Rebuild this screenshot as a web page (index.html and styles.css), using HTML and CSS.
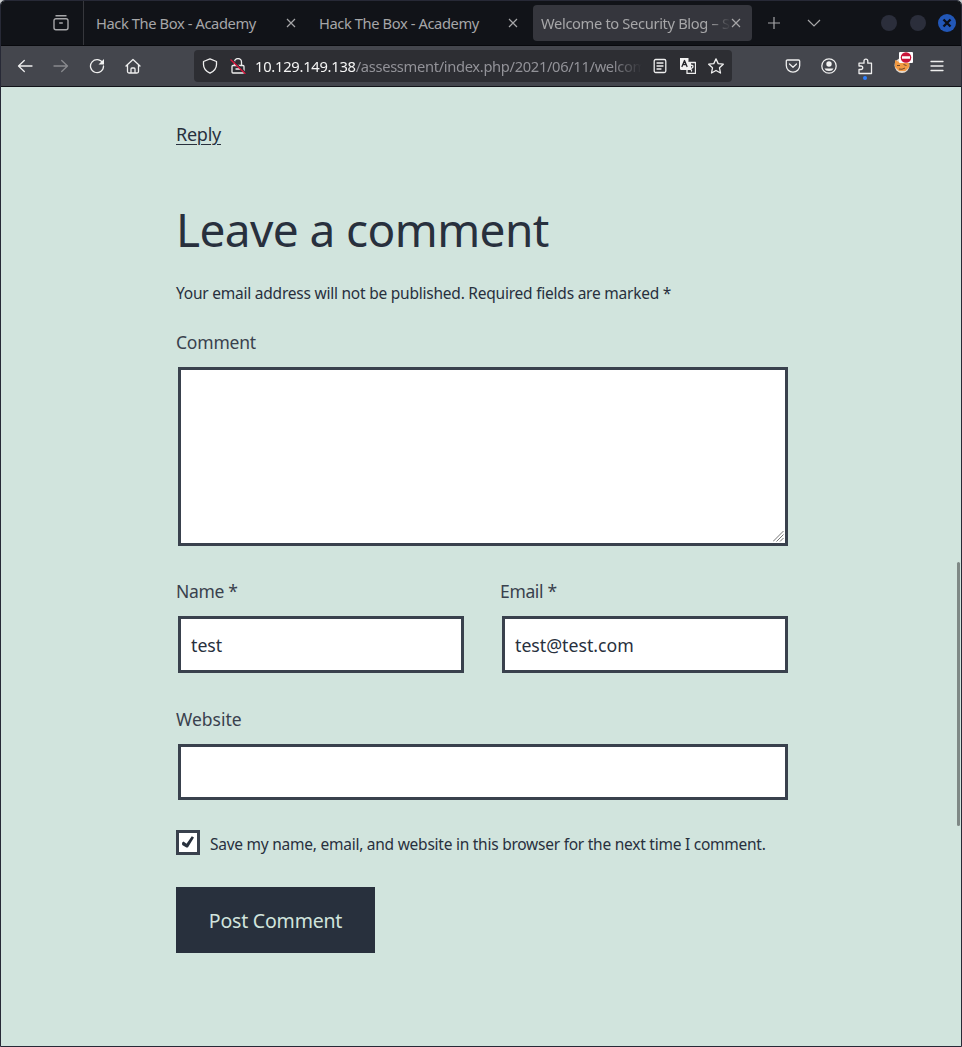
FILE: index.html
```html
<!DOCTYPE html>
<html lang="en">
<head>
<meta charset="utf-8">
<title>Welcome to Security Blog</title>
<link rel="stylesheet" href="styles.css">
</head>
<body>
<div class="window">
  <header class="tabs">
    <div class="recent"><svg width="18" height="18" viewBox="0 0 18 18"><path d="M3.500 1.700h11M4 4.700h10a2 2 0 0 1 2 2v7.100a2 2 0 0 1-2 2H4a2 2 0 0 1-2-2V6.700a2 2 0 0 1 2-2zM7.200 9h3.600"/></svg></div>
    <div class="tab first"><span class="title">Hack The Box - Academy</span><svg class="close" width="10" height="10" viewBox="0 0 10 10"><path d="M1 1l8 8M9 1l-8 8"/></svg></div>
    <div class="tab second"><span class="title">Hack The Box - Academy</span><svg class="close" width="10" height="10" viewBox="0 0 10 10"><path d="M1 1l8 8M9 1l-8 8"/></svg></div>
    <div class="tab active"><span class="title fade">Welcome to Security Blog – S</span><svg class="close" width="10" height="10" viewBox="0 0 10 10"><path d="M1 1l8 8M9 1l-8 8"/></svg></div>
    <svg class="plus" width="12" height="12" viewBox="0 0 12 12"><path d="M6 0v12M0 6h12"/></svg>
    <svg class="chevron" width="14" height="8" viewBox="0 0 14 8"><path d="M1 1l6 6 6-6"/></svg>
    <div class="controls"><i></i><i></i><b><svg width="18" height="18" viewBox="0 0 18 18"><path d="M5.500 5.500l7 7M12.500 5.500l-7 7"/></svg></b></div>
  </header>
  <nav class="toolbar">
    <svg class="nav" viewBox="0 0 16 16"><path d="M15 8H1.500M7.300 2.500L1.500 8l5.800 5.500"/></svg>
    <svg class="nav dim" viewBox="0 0 16 16"><path d="M1 8h13.500M8.700 2.500L14.500 8l-5.800 5.500"/></svg>
    <svg class="nav" viewBox="0 0 16 16"><path d="M13.800 5.200A6.500 6.500 0 1 0 14.500 8"/><path class="solid" d="M15 1v5.500H9.500z"/></svg>
    <svg class="nav" viewBox="0 0 16 16"><path d="M1 8l7-6.500L15 8M2.500 7v6.500q0 1.500 1.500 1.500h8q1.500 0 1.500-1.500V7M6 15v-4q0-1 1-1h2q1 0 1 1v4"/></svg>
    <div class="urlbar">
      <svg class="nav" viewBox="0 0 16 16"><path d="M8 .8l6.500 2.700v3c0 4.500-3 7-6.500 8.700C4.500 13.500 1.500 11 1.500 6.500v-3z"/></svg>
      <svg class="nav lock" viewBox="0 0 16 16"><path d="M4.500 7V4a3.500 3.500 0 0 1 7 0v3M3 7.500h10q1 0 1 1V14q0 1-1 1H3q-1 0-1-1V8.500q0-1 1-1zM6 11h4"/><path class="gap" d="M2 1.500l13.500 13.300"/><path class="slash" d="M1 2l14 13.500"/></svg>
      <span class="url"><em>10.129.149.138</em>/assessment/index.php/2021/06/11/welcom</span>
      <svg class="nav" viewBox="0 0 16 16"><rect x="2.200" y="1.500" width="11.600" height="13" rx="1.500"/><path d="M5 5h6M5 8h6M5 11h4"/></svg>
      <svg class="nav translate" viewBox="0 0 16 16"><path class="solid" d="M0 0h8.500v4H11v8H1.200Q0 12 0 10.800z"/><path d="M9 4.500h6.500v11H7V12"/><path class="ink" d="M2 8.500L4.500 2.500 7 8.500M3 6.500h3"/><path d="M10 8q1.500-1.500 3 0 .5 1.300-1.500 2.300M11.500 12v1"/></svg>
      <svg class="nav" viewBox="0 0 16 16"><path d="M8 .9l2.200 4.700 5.100.6-3.800 3.600 1 5.200L8 12.500 3.500 15l1-5.200L.7 6.200l5.100-.6z"/></svg>
    </div>
    <div class="actions">
      <svg class="nav" viewBox="0 0 16 16"><path d="M2.500 2h11q1.200 0 1.200 1.200V7.500a6.700 6.700 0 0 1-13.400 0V3.200Q1.300 2 2.500 2zM4.500 6L8 9.300 11.500 6"/></svg>
      <svg class="nav" viewBox="0 0 16 16"><circle cx="8" cy="8" r="7.200"/><circle class="solid" cx="8" cy="6" r="2.700"/><path class="solid" d="M3.500 10.500h9Q11.500 13 8 13t-4.500-2.500z"/></svg>
      <svg class="nav ext" viewBox="0 0 16 22"><path d="M2 15.500v-4h2a1.700 1.700 0 0 0 0-3.500H2V5.200h5V3a1.900 1.900 0 0 1 3.800 0v2.200h3.700v10.300z"/><circle class="dot" cx="8" cy="20" r="2"/></svg>
      <svg class="fox" width="20" height="22" viewBox="0 0 20 22"><circle class="ring" cx="9" cy="13.500" r="7.500"/><path class="face" d="M2 8l4 2h6l4-2 .3 7-4 4H6l-4-4z"/><path class="mark" d="M4 13.500h3M10.500 12.500l3 1M6 17q3 1 6-1"/><rect class="tile" x="6" width="14" height="11" rx="1"/><circle class="stop" cx="13" cy="5.500" r="5.300"/><path class="minus" d="M9 5.500h8"/></svg>
      <svg class="nav" viewBox="0 0 16 16"><path d="M2 3.500h12M2 8h12M2 12.500h12"/></svg>
    </div>
  </nav>
  <main class="page">
    <a class="reply"><span>Reply</span></a>
    <h1><span>Leave a comment</span></h1>
    <p class="note"><span>Your email address will not be published. Required fields are marked *</span></p>
    <label class="l-comment">Comment</label>
    <div class="field area"><svg width="11" height="11" viewBox="0 0 11 11"><path d="M0 10.500L10.500 0M3.500 10.500l7-7M7 10.500l3.500-3.500"/></svg></div>
    <div class="pair">
      <div><label class="short">Name *</label><div class="field"><span class="value">test</span></div></div>
      <div><label class="short">Email *</label><div class="field"><span class="value">test@test.com</span></div></div>
    </div>
    <label class="l-site">Website</label>
    <div class="field site"></div>
    <div class="save"><span class="check"><svg width="19" height="19" viewBox="0 0 19 19"><path d="M3 9.700l1.500-1.200 3 2.200 5.300-7.500 2.200 1.300-5.800 9.500q-.8.900-1.800.4L3.200 12z"/></svg></span><span class="savetext">Save my name, email, and website in this browser for the next time I comment.</span></div>
    <button><span>Post Comment</span></button>
  </main>
  <div class="scroll"></div>
</div>
</body>
</html>
```
FILE: styles.css
```css
* { box-sizing: border-box; }
body { margin: 0; background: #c9cbcd; font-family: "Noto Sans", sans-serif; }
svg { flex: none; display: block; fill: none; }
.window { position: relative; height: 1047px; border: 1px solid #272936; display: flex; flex-direction: column; background: #d1e4dd; overflow: hidden; border-radius: 5px 5px 0 0; }
.tabs { height: 45px; background: #111318; display: flex; align-items: center; border-bottom: 1px solid #08090d; color: #a6a6a8; flex: none; }
.tabs > * { flex: none; }
.tabs svg { stroke: #a6a6a8; stroke-width: 1.2; }
.recent { width: 83px; height: 44px; padding: 13px 0 0 51px; border-right: 1px solid #36373c; }
.tabs .recent svg { stroke-width: 1.4; }
.tab { height: 36px; display: flex; align-items: center; justify-content: space-between; font-size: 14.7px; white-space: nowrap; }
.first { width: 200px; margin-left: 12px; }
.second { width: 199px; margin-left: 23px; }
.active { width: 219px; margin-left: 15px; padding: 0 11px 0 8px; background: #35363d; border-radius: 4px; }
.title { letter-spacing: -.4px; }
.fade { width: 190px; letter-spacing: -.35px; overflow: hidden; -webkit-mask-image: linear-gradient(90deg, #000 88%, transparent); mask-image: linear-gradient(90deg, #000 88%, transparent); }
.plus { margin-left: 16px; }
.chevron { margin-left: 27px; }
.controls { display: flex; margin-left: 60px; gap: 13px; }
.controls i, .controls b { width: 16px; height: 16px; border-radius: 50%; background: #2b2e3b; }
.controls b { width: 18px; height: 18px; background: #2257b7; margin-left: -1px; }
.controls i { margin-top: 1px; }
.tabs .controls b svg { stroke: #0b0e17; stroke-width: 2.4; }
.toolbar { height: 41px; background: #44464d; border-bottom: 1px solid #111318; padding-left: 16px; display: flex; align-items: center; gap: 20px; flex: none; }
.nav { width: 16px; height: 16px; stroke: #eee; stroke-width: 1.3; stroke-linejoin: round; stroke-linecap: round; }
.dim { opacity: .4; }
.solid { fill: #f2f2f2; stroke: none; }
.urlbar { width: 538px; height: 32px; border-radius: 4px; background: #2d2e33; margin-left: 33px; display: flex; align-items: center; padding: 0 8px; gap: 12px; flex: none; }
.gap { stroke: #2d2e33; }
.slash { stroke: #dc143c; }
.url { width: 388px; margin-left: -3px; margin-right: -2px; overflow: hidden; white-space: nowrap; color: #929298; font-size: 14.7px; letter-spacing: -.33px; -webkit-mask-image: linear-gradient(90deg, #000 92%, transparent); mask-image: linear-gradient(90deg, #000 92%, transparent); }
.url em { font-style: normal; color: #f4f4f4; letter-spacing: -.25px; }
.ink { stroke: #25262b; }
.actions { display: flex; gap: 20px; margin-left: 33px; align-items: center; }
.ext { height: 22px; margin-top: 6px; }
.dot { fill: #2d80ff; stroke: none; }
.fox { margin: -6px -4px 0 0; }
.ring { fill: #e6d8ca; }
.face { fill: #f29a43; }
.mark { stroke: #6d472c; }
.tile { fill: #fff; }
.stop { fill: #c9143a; }
.minus { stroke: #fff; stroke-width: 2.3; }
.page { padding: 35px 0 0 175px; color: #28303d; width: 787px; display: flex; flex-direction: column; align-items: flex-start; }
.reply { font-size: 18px; line-height: 24px; letter-spacing: -.25px; text-decoration: underline; text-underline-offset: 3px; text-decoration-thickness: 1px; }
h1 { font-size: 46px; font-weight: 400; line-height: 60px; letter-spacing: -.6px; margin: 53px 0 0; }
.note { font-size: 15.5px; line-height: 24px; letter-spacing: -.23px; margin: 22px 0 0; white-space: nowrap; }
label { display: block; font-size: 17.5px; line-height: 26px; color: #39414d; letter-spacing: -.2px; }
.short { letter-spacing: -.35px; }
.l-comment { margin-top: 24px; }
.field { border: 3px solid #39414d; background: #fff; height: 57px; margin: 12px 0 0 2px; padding-left: 10px; display: flex; align-items: center; font-size: 17.7px; }
.area { width: 610px; height: 179px; align-items: flex-end; justify-content: flex-end; padding: 0 1px 1px 0; }
.area svg { stroke: #777; stroke-width: 1; }
.pair { display: flex; gap: 36px; margin-top: 32px; }
.pair > div { width: 288px; }
.l-site { margin-top: 33px; letter-spacing: 0; }
.site { width: 610px; height: 56px; }
.save { display: flex; margin-top: 30px; font-size: 15.5px; line-height: 28px; letter-spacing: -.25px; white-space: nowrap; }
.check { width: 24px; height: 25px; border: 3px solid #39414d; background: #fff; margin-right: 10px; }
.check svg { fill: #28303d; }
button { border: 0; background: #28303d; color: #d1e4dd; width: 199px; height: 66px; margin-top: 29px; padding: 0; font-family: inherit; font-size: 19.5px; letter-spacing: -.2px; }
.scroll { position: absolute; right: 1px; top: 561px; width: 3px; height: 264px; background: #7e8885; border-radius: 2px; }
```
